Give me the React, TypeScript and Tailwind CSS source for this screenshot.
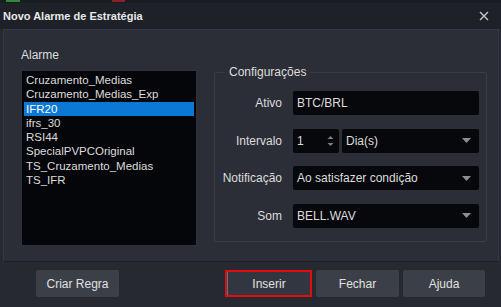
import React from "react";

const font = { fontFamily: '"Liberation Sans", Arial, sans-serif' };

function Caret() {
  return (
    <svg width="9" height="5" viewBox="0 0 9 5" className="shrink-0">
      <path d="M0 0 H9 L4.5 5 Z" fill="#8b8e94" />
    </svg>
  );
}

function Select({ value, className = "" }: { value: string; className?: string }) {
  return (
    <div className={`h-[24px] bg-[#07080c] rounded-[2px] flex items-center pl-[4px] pr-[8px] justify-between ${className}`}>
      <span>{value}</span>
      <Caret />
    </div>
  );
}

function Row({ label, children }: { label: string; children: React.ReactNode }) {
  return (
    <div className="flex items-center h-[24px]">
      <div className="w-[67px] text-right pr-0 shrink-0">{label}</div>
      <div className="ml-[11px] w-[186px] flex gap-[3px]">{children}</div>
    </div>
  );
}

export default function App() {
  const items = [
    "Cruzamento_Medias",
    "Cruzamento_Medias_Exp",
    "IFR20",
    "ifrs_30",
    "RSI44",
    "SpecialPVPCOriginal",
    "TS_Cruzamento_Medias",
    "TS_IFR",
  ];
  return (
    <div className="w-[501px] h-[307px] bg-[#262930] text-[#dcdcdc] text-[12px] leading-[14px] overflow-hidden flex flex-col" style={font}>
      {/* top strip of background app */}
      <div className="h-[3px] bg-[#1a1c22] relative shrink-0">
        <div className="absolute left-[6px] top-0 w-[14px] h-[2px] bg-[#2e8b3a]" />
        <div className="absolute left-[112px] top-0 w-[13px] h-[2px] bg-[#8a2323]" />
      </div>
      {/* title bar */}
      <div className="h-[26px] bg-[#1f2129] flex items-center justify-between pl-[3px] pr-[12px] shrink-0">
        <span className="font-bold text-[11px] text-[#e8e8e8]">Novo Alarme de Estratégia</span>
        <svg width="10" height="10" viewBox="0 0 10 10">
          <path d="M1 1 L9 9 M9 1 L1 9" stroke="#c4c6ca" strokeWidth="1.4" />
        </svg>
      </div>
      {/* main panel */}
      <div className="mx-[3px] mr-[2px] h-[233px] bg-[#2b2e37] border border-[#353842] border-b-[#1c1e23] flex shrink-0">
        <div className="ml-[17px] mt-[18px] flex flex-col w-[176px]">
          <div className="h-[14px]">Alarme</div>
          <div className="mt-[8px] h-[176px] bg-[#050609] border border-[#2f323a] pt-[2px] px-[2px] text-[11.5px]">
            {items.map((it) => (
              <div
                key={it}
                className={`h-[14.3px] leading-[14px] pl-[2px] ${it === "IFR20" ? "bg-[#0a78d4] text-white" : ""}`}
              >
                {it}
              </div>
            ))}
          </div>
        </div>
        <div className="ml-[17px] mt-[42px] w-[273px] h-[170px] border border-[#3a3d46] rounded-[2px] relative">
          <div className="absolute left-[10px] top-[-8px] bg-[#2b2e37] px-[4px] h-[14px]">Configurações</div>
          <div className="pt-[18px] flex flex-col gap-[13.5px]">
            <Row label="Ativo">
              <div className="h-[24px] w-full bg-[#07080c] rounded-[2px] flex items-center pl-[4px]">BTC/BRL</div>
            </Row>
            <Row label="Intervalo">
              <div className="h-[24px] w-[46px] bg-[#07080c] rounded-[2px] flex items-center justify-between pl-[4px] pr-[5px] shrink-0">
                <span>1</span>
                <svg width="7" height="14" viewBox="0 0 7 14">
                  <path d="M0.5 5 L3.5 2 L6.5 5 Z" fill="#7c7f85" />
                  <path d="M0.5 9 L3.5 12 L6.5 9 Z" fill="#7c7f85" />
                </svg>
              </div>
              <Select value="Dia(s)" className="flex-1" />
            </Row>
            <Row label="Notificação">
              <Select value="Ao satisfazer condição" className="w-full" />
            </Row>
            <Row label="Som">
              <Select value="BELL.WAV" className="w-full" />
            </Row>
          </div>
        </div>
      </div>
      {/* buttons */}
      <div className="flex items-center mt-[8px] pl-[36px]">
        <button className="w-[83px] h-[27px] bg-[#3b3f47] rounded-[2px] text-[#e0e0e0]">Criar Regra</button>
        <div className="ml-[106px] w-[87px] h-[27px] border-2 border-[#e8090b] flex">
          <button className="flex-1 bg-[#323640] border-l border-[#2c8a8e] text-[#e0e0e0]">Inserir</button>
        </div>
        <button className="ml-[4px] w-[83px] h-[27px] bg-[#3b3f47] rounded-[2px] text-[#e0e0e0]">Fechar</button>
        <button className="ml-[4px] w-[82px] h-[27px] bg-[#3b3f47] rounded-[2px] text-[#e0e0e0]">Ajuda</button>
      </div>
    </div>
  );
}
